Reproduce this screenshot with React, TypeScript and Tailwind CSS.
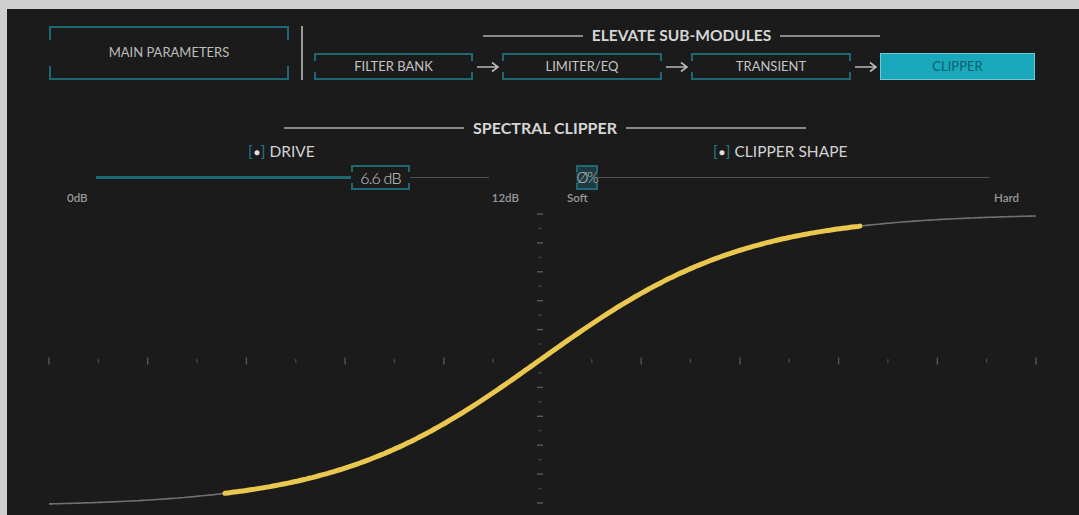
import React from 'react';

// Box with full top/bottom edges and short corner stubs on the sides
function BracketBox({
  className = '',
  stub = 6,
  children
}: {
  className?: string;
  stub?: number;
  children?: React.ReactNode;
}) {
  const s = { height: stub };
  return (
    <div className={`relative flex items-center justify-center border-y-2 border-[#1d6872] ${className}`}>
      <span className="absolute left-0 top-0 w-[2px] bg-[#1d6872]" style={s} />
      <span className="absolute right-0 top-0 w-[2px] bg-[#1d6872]" style={s} />
      <span className="absolute left-0 bottom-0 w-[2px] bg-[#1d6872]" style={s} />
      <span className="absolute right-0 bottom-0 w-[2px] bg-[#1d6872]" style={s} />
      {children}
    </div>
  );
}

function Arrow() {
  return (
    <div className="flex w-[29px] items-center justify-center">
      <svg width="24" height="12" viewBox="0 0 24 12">
        <path d="M1 6 H22 M16 1.5 L22 6 L16 10.5" fill="none" stroke="#b8b8b8" strokeWidth="1.6" />
      </svg>
    </div>
  );
}

function SectionTitle({ text, lineW, size }: { text: string; lineW: number; size: string }) {
  return (
    <div className="flex h-[20px] items-center justify-center gap-[9px]">
      <span className="h-[2px] bg-[#8a8a8a]" style={{ width: lineW }} />
      <span className={`${size} font-bold text-[#d6d6d6]`}>{text}</span>
      <span className="h-[2px] bg-[#8a8a8a]" style={{ width: lineW }} />
    </div>
  );
}

function ParamLabel({ text }: { text: string }) {
  return (
    <div className="flex h-[20px] items-center text-[15.5px] text-[#d2d2d2]">
      <span className="text-[#1f7c88]">[</span>
      <span className="mx-[1px] text-[10px] text-[#e0e0e0]">●</span>
      <span className="mr-[4px] text-[#1f7c88]">]</span>
      {text}
    </div>
  );
}

// transfer curve of the clipper
const K = 2.4;
const shape = (t: number) => Math.tanh(K * t) / Math.tanh(K);
const CX = 540;
const HALF = 494;
const CY = 360;
const AMP = 144;

function curvePath(x0: number, x1: number) {
  let d = '';
  for (let x = x0; x <= x1; x += 3) {
    const y = CY - AMP * shape((x - CX) / HALF);
    d += `${d ? 'L' : 'M'}${x.toFixed(1)} ${y.toFixed(1)} `;
  }
  const yEnd = CY - AMP * shape((x1 - CX) / HALF);
  d += `L${x1} ${yEnd.toFixed(1)}`;
  return d;
}

function TransferGraph() {
  const hTicks = Array.from({ length: 21 }, (_, i) => 49 + i * 49.35);
  const vTicks = Array.from({ length: 21 }, (_, i) => 214 + i * 14.45);
  return (
    <svg width="1072" height="310" viewBox="7 205 1072 310" className="block">
      {hTicks.map((x, i) =>
        Math.abs(x - CX) < 5 ? null : (
          <line
            key={`h${i}`}
            x1={x}
            x2={x}
            y1={i % 2 === 0 ? 357.5 : 359}
            y2={i % 2 === 0 ? 364.5 : 363}
            stroke={i % 2 === 0 ? '#575757' : '#444444'}
            strokeWidth="1.4"
          />
        )
      )}
      {vTicks.map((y, i) =>
        Math.abs(y - CY) < 5 ? null : (
          <line
            key={`v${i}`}
            x1={i % 2 === 0 ? 537 : 538.5}
            x2={i % 2 === 0 ? 543 : 541.5}
            y1={y}
            y2={y}
            stroke={i % 2 === 0 ? '#5a5a5a' : '#464646'}
            strokeWidth="1.4"
          />
        )
      )}
      <path d={curvePath(49, 228)} fill="none" stroke="#707070" strokeWidth="1.6" />
      <path d={curvePath(857, 1036)} fill="none" stroke="#707070" strokeWidth="1.6" />
      <path
        d={curvePath(225, 860)}
        fill="none"
        stroke="#eac74e"
        strokeWidth="5"
        strokeLinecap="round"
      />
    </svg>
  );
}

export default function App() {
  return (
    <div
      className="flex h-[515px] w-[1079px] overflow-hidden bg-[#cfcfcf] pl-[7px] pt-[9px]"
      style={{ fontFamily: 'Lato, "Open Sans", sans-serif' }}
    >
      <div className="flex flex-1 flex-col bg-[#1b1b1b]">
        {/* module navigation */}
        <div className="ml-[42px] mt-[17px] flex items-start">
          <BracketBox className="h-[54px] w-[240px]" stub={12}>
            <span className="text-[13px] text-[#bdbdbd]">MAIN PARAMETERS</span>
          </BracketBox>
          <div className="ml-[12px] h-[54px] w-[2px] bg-[#9a9a9a]" />
          <div className="ml-[11px] flex w-[721px] flex-col">
            <div className="pl-[14px]">
              <SectionTitle text="ELEVATE SUB-MODULES" lineW={100} size="text-[15.5px]" />
            </div>
            <div className="mt-[7px] flex h-[27px]">
              <BracketBox className="w-[159px]">
                <span className="text-[13px] text-[#c4c4c4]">FILTER BANK</span>
              </BracketBox>
              <Arrow />
              <BracketBox className="w-[160px]">
                <span className="text-[13px] text-[#c4c4c4]">LIMITER/EQ</span>
              </BracketBox>
              <Arrow />
              <BracketBox className="w-[160px]">
                <span className="text-[13px] text-[#c4c4c4]">TRANSIENT</span>
              </BracketBox>
              <Arrow />
              <div className="flex w-[155px] items-center justify-center border border-[#6fc9d6] bg-[#19a8bc]">
                <span className="text-[13px] text-[#0f5f6c]">CLIPPER</span>
              </div>
            </div>
          </div>
        </div>

        {/* spectral clipper controls */}
        <div className="mt-[38px] pl-[4px]">
          <SectionTitle text="SPECTRAL CLIPPER" lineW={180} size="text-[16px]" />
        </div>
        <div className="ml-[60px] mt-[4px] flex gap-[48px]">
          <div className="flex w-[452px] flex-col">
            <div className="pl-[181px]">
              <ParamLabel text="DRIVE" />
            </div>
            <div className="mt-[3px] flex h-[25px] items-center pl-[29px]">
              <span className="h-[3px] w-[255px] bg-[#1d6872]" />
              <BracketBox className="h-[25px] w-[59px]" stub={5}>
                <span className="text-[16px] font-light tracking-[-0.05em] text-[#cfcfcf]">6.6 dB</span>
              </BracketBox>
              <span className="h-[1px] w-[79px] bg-[#505050]" />
            </div>
            <div className="mt-[1px] flex h-[14px] items-center justify-between text-[11.5px] font-semibold text-[#9a9a9a]">
              <span>0dB</span>
              <span>12dB</span>
            </div>
          </div>
          <div className="flex w-[452px] flex-col">
            <div className="pl-[146px]">
              <ParamLabel text="CLIPPER SHAPE" />
            </div>
            <div className="mt-[3px] flex h-[25px] items-center pl-[9px]">
              <BracketBox className="h-[25px] w-[22px] bg-[#1c3a3f]" stub={5}>
                <span className="text-[15px] font-light tracking-[-0.08em] text-[#c6c6c6]">Ø%</span>
              </BracketBox>
              <span className="h-[1px] w-[392px] bg-[#505050]" />
            </div>
            <div className="mt-[1px] flex h-[14px] items-center justify-between text-[11.5px] font-semibold text-[#9a9a9a]">
              <span>Soft</span>
              <span>Hard</span>
            </div>
          </div>
        </div>

        <TransferGraph />
      </div>
    </div>
  );
}
